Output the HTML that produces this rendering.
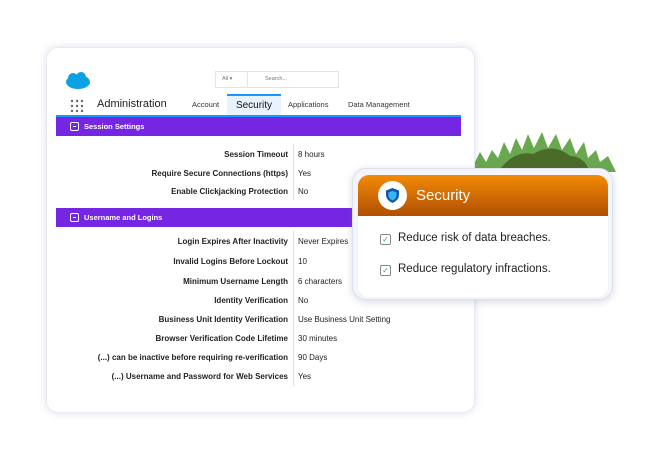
<html><head><style>
body{margin:0;width:660px;height:460px;background:#fff;position:relative;overflow:hidden;font-family:"Liberation Sans",sans-serif}
.card{position:absolute;left:46px;top:47px;width:427px;height:364px;background:#fff;border-radius:12px;box-shadow:0 0 8px rgba(120,130,170,.25);border:1px solid #e8eaf2}
.bar{position:absolute;left:56px;width:405px;height:19px;background:#7526e3;color:#fff;font-size:7.5px;font-weight:bold;line-height:19px}
.bar i{display:inline-block;width:7px;height:7px;border:1px solid #fff;border-radius:2px;margin:0 5px 0 14px;vertical-align:-2px;position:relative}
.bar i:after{content:"";position:absolute;left:2px;top:3px;width:3px;height:1px;background:#fff}
.row{position:absolute;left:56px;width:405px;font-size:8px;color:#222;height:19px;line-height:19px}
.row b{position:absolute;right:173px;font-weight:bold;white-space:nowrap}
.row span{position:absolute;left:242px}
.div{position:absolute;left:293px;width:1px;background:#ddd}
</style></head><body>
<svg style="position:absolute;left:458px;top:128px" width="160" height="48"><path d="M4 44 L10 30 L16 36 L22 24 L28 34 L34 22 L40 30 L46 14 L52 26 L58 10 L64 22 L70 6 L76 20 L84 4 L90 20 L98 6 L104 22 L112 10 L118 26 L126 14 L130 30 L138 22 L142 34 L150 28 L158 44Z" fill="#6aa84f"/><path d="M40 44 Q55 22 75 26 Q95 14 112 28 Q126 28 132 44Z" fill="#4a6b2a"/></svg>
<div class="card"></div>
<svg style="position:absolute;left:65px;top:72px" width="26" height="18"><ellipse cx="13" cy="10" rx="12" ry="7" fill="#0ba1e2"/><circle cx="8" cy="6" r="5" fill="#0ba1e2"/><circle cx="16" cy="5" r="5" fill="#0ba1e2"/></svg>
<div style="position:absolute;left:215px;top:71px;width:122px;height:15px;border:1px solid #e4e4e4;font-size:5.5px;color:#777;line-height:15px"><span style="margin-left:6px">All ▾</span><span style="position:absolute;left:31px;top:0;border-left:1px solid #e4e4e4;height:15px;padding-left:17px">Search...</span></div>
<svg style="position:absolute;left:70px;top:99px" width="14" height="14" fill="#666"><g><circle cx="2" cy="2" r="1.2"/><circle cx="7" cy="2" r="1.2"/><circle cx="12" cy="2" r="1.2"/><circle cx="2" cy="7" r="1.2"/><circle cx="7" cy="7" r="1.2"/><circle cx="12" cy="7" r="1.2"/><circle cx="2" cy="12" r="1.2"/><circle cx="7" cy="12" r="1.2"/><circle cx="12" cy="12" r="1.2"/></g></svg>
<div style="position:absolute;left:97px;top:98px;font-size:11px;color:#222">Administration</div>
<div style="position:absolute;left:192px;top:100px;font-size:7.5px;color:#333">Account</div>
<div style="position:absolute;left:227px;top:94px;width:54px;height:21px;background:#e8f2fc;border-top:2px solid #1b96ff;box-sizing:border-box;font-size:10px;color:#111;text-align:center;line-height:19px">Security</div>
<div style="position:absolute;left:288px;top:100px;font-size:7.5px;color:#333">Applications</div>
<div style="position:absolute;left:348px;top:100px;font-size:7.5px;color:#333">Data Management</div>
<div style="position:absolute;left:56px;top:115px;width:405px;height:2px;background:#1b96ff"></div>
<div class="bar" style="top:117px"><i></i>Session Settings</div>
<div class="bar" style="top:208px"><i></i>Username and Logins</div>
<div class="div" style="top:144px;height:56px"></div>
<div class="div" style="top:231px;height:155px"></div>
<div class="row" style="top:145px"><b>Session Timeout</b><span>8 hours</span></div>
<div class="row" style="top:164px"><b>Require Secure Connections (https)</b><span>Yes</span></div>
<div class="row" style="top:182px"><b>Enable Clickjacking Protection</b><span>No</span></div>
<div class="row" style="top:232px"><b>Login Expires After Inactivity</b><span>Never Expires</span></div>
<div class="row" style="top:252px"><b>Invalid Logins Before Lockout</b><span>10</span></div>
<div class="row" style="top:272px"><b>Minimum Username Length</b><span>6 characters</span></div>
<div class="row" style="top:291px"><b>Identity Verification</b><span>No</span></div>
<div class="row" style="top:310px"><b>Business Unit Identity Verification</b><span>Use Business Unit Setting</span></div>
<div class="row" style="top:329px"><b>Browser Verification Code Lifetime</b><span>30 minutes</span></div>
<div class="row" style="top:348px"><b>(...) can be inactive before requiring re-verification</b><span>90 Days</span></div>
<div class="row" style="top:367px"><b>(...) Username and Password for Web Services</b><span>Yes</span></div>
<div style="position:absolute;left:352px;top:168px;width:261px;height:132px;background:#f4f5fb;border:1px solid #dde0ee;border-radius:14px;box-shadow:0 2px 8px rgba(100,110,160,.25);box-sizing:border-box"></div>
<div style="position:absolute;left:358px;top:175px;width:250px;height:122px;background:#fff;border-radius:11px;overflow:hidden">
<div style="height:41px;background:linear-gradient(#f38a05,#b04f02);color:#fff;font-size:15px;line-height:41px"><span style="position:absolute;left:20px;top:6px;width:29px;height:29px;border-radius:50%;background:#fff"></span>
<svg style="position:absolute;left:27px;top:12px" width="15" height="17"><path d="M7.5 1 L14 3.5 V8 Q14 13 7.5 16 Q1 13 1 8 V3.5Z" fill="#0b5cab"/><path d="M7.5 4 L11.5 5.5 V8.5 Q11.5 11.5 7.5 13.5 Q3.5 11.5 3.5 8.5 V5.5Z" fill="#3cb4f0"/></svg>
<span style="position:absolute;left:58px;top:0">Security</span></div>
</div>
<div style="position:absolute;left:380px;top:234px;width:9px;height:9px;border:1px solid #888;border-radius:2px;font-size:8px;color:#2aa56a;line-height:9px;text-align:center">✓</div>
<div style="position:absolute;left:398px;top:232px;font-size:11.5px;color:#222">Reduce risk of data breaches.</div>
<div style="position:absolute;left:380px;top:265px;width:9px;height:9px;border:1px solid #888;border-radius:2px;font-size:8px;color:#2aa56a;line-height:9px;text-align:center">✓</div>
<div style="position:absolute;left:398px;top:263px;font-size:11.5px;color:#222">Reduce regulatory infractions.</div>
</body></html>
